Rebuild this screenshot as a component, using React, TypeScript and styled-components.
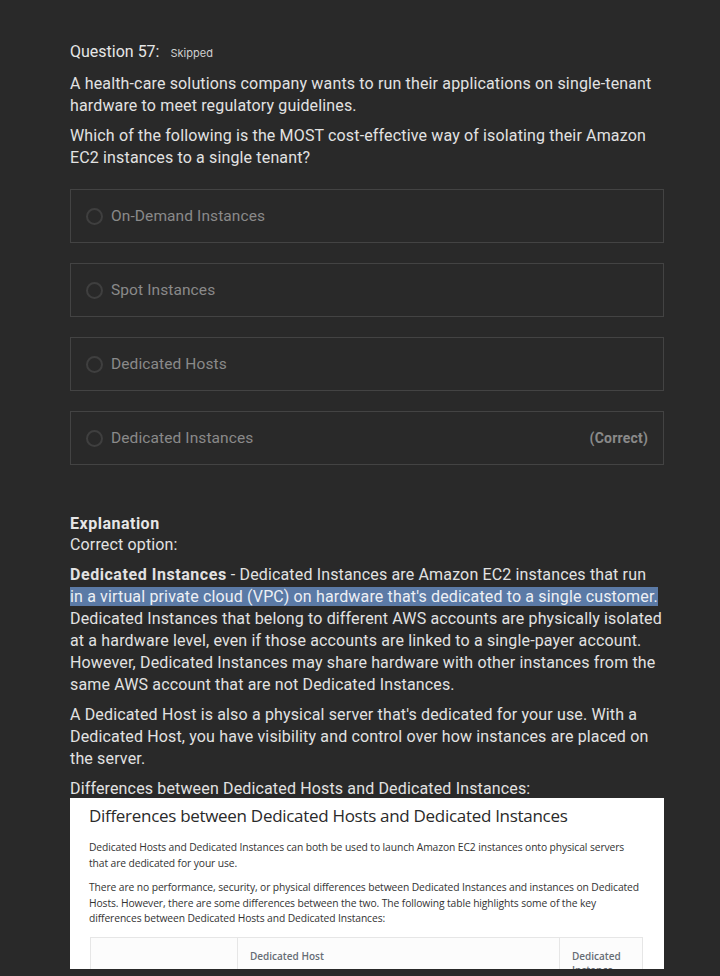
import React from "react";
import styled, { createGlobalStyle } from "styled-components";

const Global = createGlobalStyle`
  html, body { margin: 0; padding: 0; background: #292929; }
  body { font-family: Roboto, "Noto Sans", sans-serif; color: #e2e2e2; }
`;

const Page = styled.div`
  width: 594px;
  padding: 40px 56px 0 70px;
  box-sizing: content-box;
`;

const Header = styled.div`
  display: flex;
  align-items: baseline;
  gap: 11px;
  font-size: 16px;
  line-height: 24px;
  color: #e6e6e6;
`;

const Status = styled.span`
  font-family: Inter, sans-serif;
  font-size: 11px;
  color: #d0d0d0;
`;

const Para = styled.p<{ $mt?: number }>`
  margin: ${(p) => p.$mt ?? 8}px 0 0;
  font-size: 16px;
  line-height: 22px;
  letter-spacing: 0.15px;
  color: #e2e2e2;
`;

const Strong = styled.b`
  font-weight: 700;
  letter-spacing: 0.55px;
`;

const Options = styled.div`
  display: flex;
  flex-direction: column;
  gap: 20px;
  margin-top: 20px;
`;

const Option = styled.div`
  height: 54px;
  box-sizing: border-box;
  border: 1px solid #434343;
  display: flex;
  align-items: center;
  padding: 0 15px 0 15px;
`;

const Radio = styled.span`
  width: 13px;
  height: 13px;
  border-radius: 50%;
  border: 2px solid #3f3f3f;
  margin-right: 8px;
  flex: none;
`;

const OptionText = styled.span`
  font-size: 15.5px;
  letter-spacing: 0.1px;
  color: #8a8a8a;
  flex: 1;
`;

const Tag = styled.span`
  font-size: 14px;
  font-weight: 700;
  letter-spacing: 0.2px;
  color: #8a8a8a;
`;

const ExplTitle = styled.div`
  margin-top: 48px;
  font-size: 16px;
  font-weight: 700;
  line-height: 21px;
  letter-spacing: 0.5px;
  color: #e6e6e6;
`;

const Line = styled.div`
  font-size: 16px;
  line-height: 22px;
  letter-spacing: 0.15px;
  color: #e2e2e2;
`;

const Sel = styled.span`
  background: #5b7aa6;
  color: #eef0f4;
`;

const Shot = styled.div`
  margin-top: -2px;
  background: #ffffff;
  height: 171px;
  overflow: hidden;
  padding: 6px 21px 0 19px;
  box-sizing: border-box;
  font-family: "Open Sans", sans-serif;
  color: #333;
`;

const ShotTitle = styled.div`
  font-size: 17px;
  line-height: 24px;
  color: #2a2a2a;
  letter-spacing: -0.3px;
`;

const ShotPara = styled.p<{ $mt: number }>`
  margin: ${(p) => p.$mt}px 0 0;
  font-size: 10.3px;
  line-height: 15.5px;
  color: #333;
  letter-spacing: -0.1px;
`;

const Table = styled.div`
  margin-top: 10px;
  margin-left: 1px;
  border: 1px solid #e6e6e6;
  border-bottom: none;
  display: grid;
  grid-template-columns: 146px 322px 1fr;
  height: 60px;
  background: #fcfcfc;
`;

const Cell = styled.div<{ $first?: boolean }>`
  border-left: ${(p) => (p.$first ? "none" : "1px solid #e6e6e6")};
  padding: 11px 12px;
  font-size: 10px;
  line-height: 14px;
  color: #666d75;
  font-weight: 600;
`;

export default function App() {
  const opts = [
    "On-Demand Instances",
    "Spot Instances",
    "Dedicated Hosts",
    "Dedicated Instances",
  ];
  return (
    <>
      <Global />
      <Page>
        <Header>
          <span>Question 57:</span>
          <Status>Skipped</Status>
        </Header>
        <Para $mt={8}>
          A health-care solutions company wants to run their applications on single-tenant
          hardware to meet regulatory guidelines.
        </Para>
        <Para>
          Which of the following is the MOST cost-effective way of isolating their Amazon
          EC2 instances to a single tenant?
        </Para>
        <Options>
          {opts.map((o, i) => (
            <Option key={o}>
              <Radio />
              <OptionText>{o}</OptionText>
              {i === 3 && <Tag>(Correct)</Tag>}
            </Option>
          ))}
        </Options>
        <ExplTitle>Explanation</ExplTitle>
        <Line>Correct option:</Line>
        <Para $mt={8}>
          <Strong>Dedicated Instances</Strong> - Dedicated Instances are Amazon EC2 instances that run
          <br />
          <Sel>in a virtual private cloud (VPC) on hardware that's dedicated to a single customer.</Sel>{" "}
          Dedicated Instances that belong to different AWS accounts are physically isolated at a
          hardware level, even if those accounts are linked to a single-payer account. However,
          Dedicated Instances may share hardware with other instances from the same AWS account
          that are not Dedicated Instances.
        </Para>
        <Para>
          A Dedicated Host is also a physical server that's dedicated for your use. With a
          Dedicated Host, you have visibility and control over how instances are placed on the
          server.
        </Para>
        <Para>Differences between Dedicated Hosts and Dedicated Instances:</Para>
        <Shot>
          <ShotTitle>Differences between Dedicated Hosts and Dedicated Instances</ShotTitle>
          <ShotPara $mt={12}>
            Dedicated Hosts and Dedicated Instances can both be used to launch Amazon EC2 instances
            onto physical servers that are dedicated for your use.
          </ShotPara>
          <ShotPara $mt={9}>
            There are no performance, security, or physical differences between Dedicated Instances
            and instances on Dedicated Hosts. However, there are some differences between the two.
            The following table highlights some of the key differences between Dedicated Hosts and
            Dedicated Instances:
          </ShotPara>
          <Table>
            <Cell $first />
            <Cell>Dedicated Host</Cell>
            <Cell>Dedicated Instance</Cell>
          </Table>
        </Shot>
      </Page>
    </>
  );
}
